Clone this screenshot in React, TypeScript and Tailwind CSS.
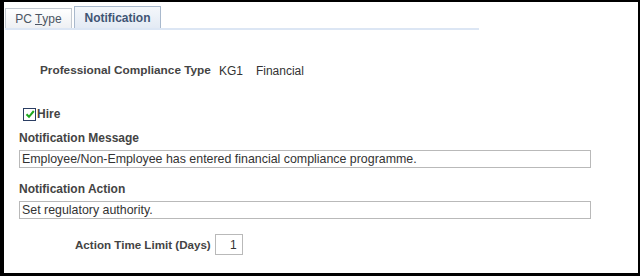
export default function App() {
  return (
    <div className="w-[640px] h-[276px] bg-black pl-[4px] pt-[2px] pr-[2px] pb-[3px] font-['Liberation_Sans',Arial,sans-serif]">
      <div className="w-full h-full bg-white flex flex-col">
        {/* tabs */}
        <div className="pl-[1px] pt-[4px] w-[475px]">
          <div className="flex items-end gap-[2px]">
            <div className="h-[20px] w-[67px] border border-b-0 border-[#c3c9d1] bg-gradient-to-b from-[#ffffff] to-[#eef0f3] flex items-center justify-center text-[12px] text-[#4b5563]">
              PC <span className="underline ml-[3px]">T</span>ype
            </div>
            <div className="h-[22px] w-[87px] border border-b-0 border-[#a9b9cd] bg-gradient-to-b from-[#f4f7fb] to-[#e3eaf4] flex items-center justify-center text-[12px] font-bold text-[#3f5574]">
              Notification
            </div>
          </div>
          <div className="h-[2px] bg-[#dce6f4]" />
        </div>

        <div className="flex flex-col text-[12px] text-[#333]">
          <div className="flex items-center mt-[34px] ml-[36px] h-[14px]">
            <span className="font-bold text-[#444] text-[11.8px]">Professional Compliance Type</span>
            <span className="ml-[8px]">KG1</span>
            <span className="ml-[13px]">Financial</span>
          </div>

          <div className="flex items-center mt-[29px] ml-[19px] h-[14px]">
            <span className="w-[13px] h-[13px] border border-[#2b3e63] bg-white flex items-center justify-center">
              <svg width="10" height="10" viewBox="0 0 10 10">
                <path d="M1.5 5.2 L4 7.8 L8.8 2" fill="none" stroke="#1fa81f" strokeWidth="2" />
              </svg>
            </span>
            <span className="ml-[1px] font-bold text-[#444]">Hire</span>
          </div>

          <div className="mt-[10px] ml-[15px] font-bold text-[#444] h-[14px] flex items-center">Notification Message</div>
          <div className="mt-[5px] ml-[15px] w-[572px] h-[18px] border border-[#b9b9b9] flex items-center px-[2px] text-[#333] text-[12.4px]">
            Employee/Non-Employee has entered financial compliance programme.
          </div>

          <div className="mt-[14px] ml-[15px] font-bold text-[#444] h-[14px] flex items-center">Notification Action</div>
          <div className="mt-[5px] ml-[15px] w-[572px] h-[18px] border border-[#b9b9b9] flex items-center px-[2px] text-[#333] text-[12.4px]">
            Set regulatory authority.
          </div>

          <div className="mt-[15px] ml-[71px] flex items-center">
            <span className="font-bold text-[#444] text-[11.6px]">Action Time Limit (Days)</span>
            <span className="ml-[4px] w-[28px] h-[21px] border border-[#b9b9b9] flex items-center justify-end pr-[5px] text-[#333]">1</span>
          </div>
        </div>
      </div>
    </div>
  );
}
